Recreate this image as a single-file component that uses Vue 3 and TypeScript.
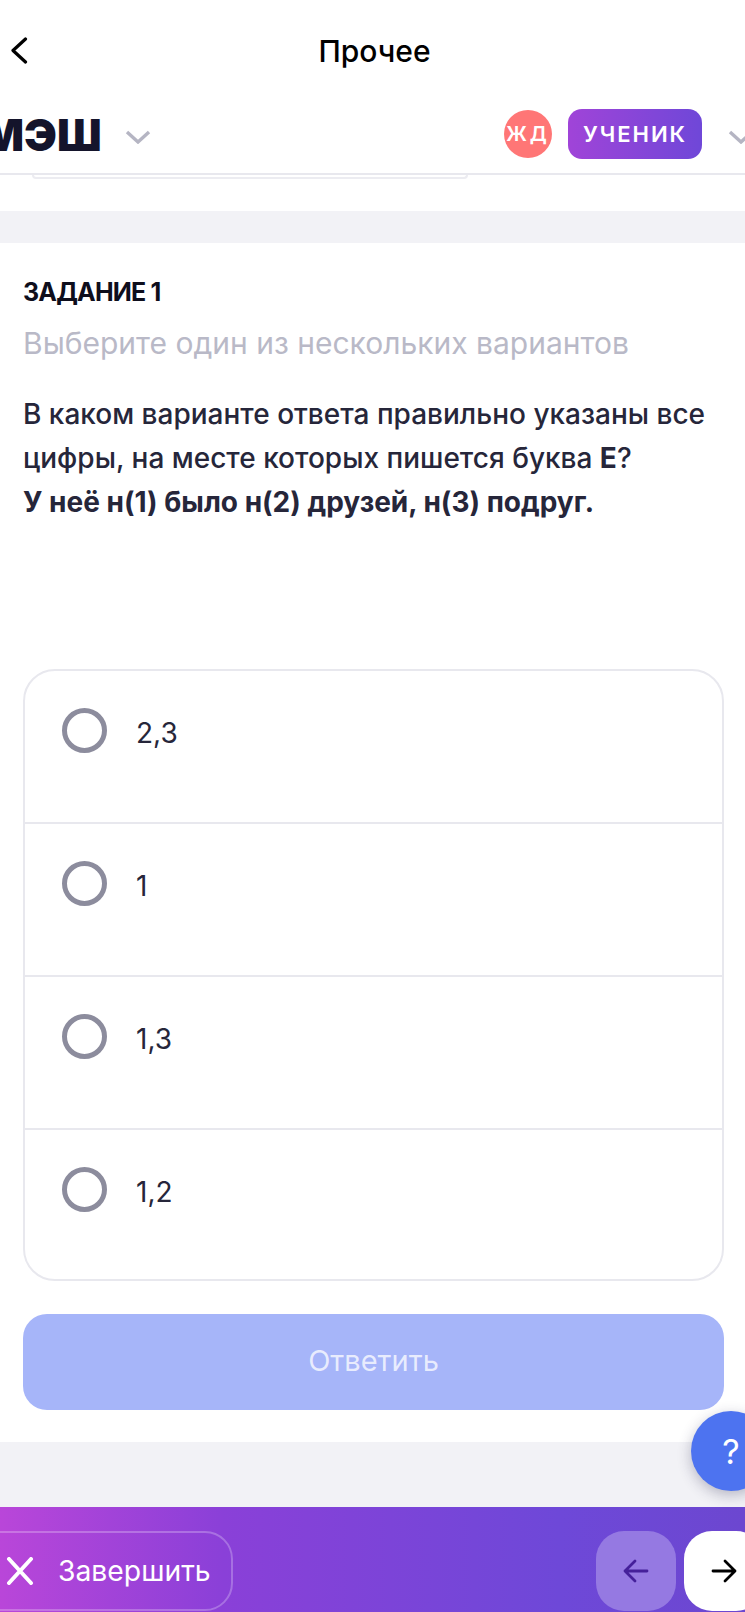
<script setup lang="ts">
const options: string[] = ['2,3', '1', '1,3', '1,2']
</script>

<template>
  <div class="page">
    <header class="nav">
      <svg class="back" width="18" height="27" viewBox="0 0 18 27"><path d="M15.5 2 3 13.5 15.5 25" fill="none" stroke="#000" stroke-width="3.2" stroke-linecap="round" stroke-linejoin="round"/></svg>
      <span class="nav-title">Прочее</span>
    </header>
    <div class="topbar">
      <span class="logo">МЭШ</span>
      <svg class="chev" width="26" height="14" viewBox="0 0 26 14"><path d="M2 2 13 12 24 2" fill="none" stroke="#b5b5c3" stroke-width="3.4"/></svg>
      <span class="avatar">ЖД</span>
      <span class="role">УЧЕНИК</span>
      <svg class="chev chev-r" width="26" height="14" viewBox="0 0 26 14"><path d="M2 2 13 12 24 2" fill="none" stroke="#b5b5c3" stroke-width="3.4"/></svg>
    </div>
    <div class="scrap-wrap"><div class="scrap"></div></div>
    <main class="task">
      <h2 class="task-num">ЗАДАНИЕ 1</h2>
      <p class="hint">Выберите один из нескольких вариантов</p>
      <p class="question">В каком варианте ответа правильно указаны все цифры, на месте которых пишется буква <b>Е</b>?<br><b>У неё н(1) было н(2) друзей, н(3) подруг.</b></p>
      <div class="options">
        <div v-for="o in options" :key="o" class="option">
          <span class="radio"></span>
          <span class="opt-text">{{ o }}</span>
        </div>
      </div>
      <button class="submit">Ответить</button>
    </main>
    <div class="gap-bottom"></div>
    <footer class="footer">
      <button class="finish">
        <svg width="28" height="28" viewBox="0 0 28 28"><path d="M3 2 25 26M25 2 3 26" fill="none" stroke="#fff" stroke-width="4" stroke-linecap="round"/></svg>
        <span>Завершить</span>
      </button>
      <div class="arrows">
        <button class="arrow arrow-prev">
          <svg width="26" height="24" viewBox="0 0 26 24"><path d="M24 12H2M12 2 2 12 12 22" fill="none" stroke="#45209a" stroke-width="2.8" stroke-linecap="round" stroke-linejoin="round"/></svg>
        </button>
        <button class="arrow arrow-next">
          <svg width="26" height="24" viewBox="0 0 26 24"><path d="M2 12H24M14 2 24 12 14 22" fill="none" stroke="#000" stroke-width="2.8" stroke-linecap="round" stroke-linejoin="round"/></svg>
        </button>
      </div>
    </footer>
    <button class="help">?</button>
  </div>
</template>

<style>
html, body { margin: 0; background: #fff; }
</style>

<style scoped>
.page {
  position: relative;
  width: 745px;
  height: 1612px;
  overflow: hidden;
  background: #fff;
  font-family: Inter, "Liberation Sans", sans-serif;
  color: #26263a;
  display: flex;
  flex-direction: column;
}
.nav {
  position: relative;
  height: 103px;
  flex: none;
  display: flex;
  align-items: flex-start;
  justify-content: center;
}
.back { position: absolute; left: 10px; top: 37px; }
.nav-title {
  margin: 33px 0 0 4px;
  font-family: Inter, sans-serif;
  font-size: 30px;
  font-weight: 500;
  line-height: 36px;
  color: #000;
}
.topbar {
  height: 70px;
  flex: none;
  display: flex;
  align-items: flex-start;
  border-bottom: 2px solid #e8e8ee;
  box-sizing: content-box;
}
.logo {
  margin: 7px 0 0 -18px;
  font-family: Inter, sans-serif;
  font-size: 44px;
  font-weight: 900;
  line-height: 50px;
  color: #14142b;
}
.chev { margin: 27px 0 0 23px; flex: none; }
.avatar {
  margin: 7px 0 0 auto;
  width: 48px;
  height: 48px;
  border-radius: 50%;
  background: #ff7676;
  color: #fff;
  font-size: 20px;
  font-weight: 600;
  letter-spacing: 3px;
  display: flex;
  align-items: center;
  justify-content: center;
  flex: none;
}
.role {
  margin: 6px 0 0 16px;
  width: 134px;
  height: 50px;
  border-radius: 14px;
  background: linear-gradient(90deg, #a044d8, #6f47d8);
  color: #fff;
  font-size: 22px;
  font-weight: 600;
  letter-spacing: 2px;
  display: flex;
  align-items: center;
  justify-content: center;
  flex: none;
}
.chev-r { margin: 27px -9px 0 26px; }
.scrap-wrap {
  height: 36px;
  flex: none;
}
.scrap {
  margin-left: 32px;
  width: 436px;
  height: 4px;
  box-sizing: border-box;
  border: 2px solid #ececf1;
  border-top: 0;
  border-radius: 0 0 18px 18px;
}
.task {
  border-top: 32px solid #f2f2f6;
  flex: none;
  height: 1231px;
  box-sizing: border-box;
  padding: 31px 21px 0 23px;
  display: flex;
  flex-direction: column;
}
.task-num {
  margin: 0;
  font-size: 25px;
  font-weight: 700;
  line-height: 36px;
  color: #0e0e1c;
  letter-spacing: -0.8px;
}
.hint {
  margin: 11px 0 0;
  font-size: 30px;
  line-height: 44px;
  color: #b9b9c7;
}
.question {
  margin: 27px 0 0;
  font-size: 28px;
  font-weight: 450;
  line-height: 44px;
  color: #26263a;
}
.question b { font-size: 28px; font-weight: 700; }
.options {
  margin-top: auto;
  border: 2px solid #e8e8ee;
  border-radius: 32px;
  height: 612px;
  box-sizing: border-box;
  flex: none;
}
.option {
  height: 153px;
  box-sizing: border-box;
  padding: 37px 0 0 37px;
  display: flex;
  align-items: flex-start;
  border-bottom: 2px solid #e8e8ee;
}
.option:last-child { border-bottom: 0; }
.radio {
  width: 45px;
  height: 45px;
  box-sizing: border-box;
  border: 5px solid #8c8c9d;
  border-radius: 50%;
  flex: none;
}
.opt-text {
  margin-left: 29px;
  font-size: 28px;
  line-height: 50px;
}
.submit {
  margin-top: 33px;
  margin-bottom: 32px;
  height: 96px;
  flex: none;
  border: 0;
  border-radius: 24px;
  padding: 0 0 3px;
  background: #a6b5f9;
  color: rgba(255, 255, 255, 0.75);
  font-family: inherit;
  font-size: 29px;
}
.gap-bottom {
  height: 65px;
  flex: none;
  background: #f2f2f6;
}
.footer {
  height: 105px;
  flex: none;
  box-sizing: border-box;
  padding: 24px 0 0;
  background: linear-gradient(90deg, #b946d9 0%, #8a40d8 30%, #6e48d8 75%, #6c47d0 100%);
  display: flex;
  align-items: flex-start;
  justify-content: space-between;
}
.finish {
  margin-left: -32px;
  width: 265px;
  height: 80px;
  box-sizing: border-box;
  padding: 0 0 0 36px;
  border: 2px solid rgba(255, 255, 255, 0.25);
  border-radius: 28px;
  background: transparent;
  color: #fff;
  font-family: inherit;
  font-size: 28.3px;
  display: flex;
  align-items: center;
  gap: 24px;
}
.arrows {
  display: flex;
  gap: 8px;
  margin-right: -19px;
}
.arrow {
  width: 80px;
  height: 80px;
  border: 0;
  border-radius: 28px;
  padding: 0;
  display: flex;
  align-items: center;
  justify-content: center;
}
.arrow-prev { background: #9579e2; }
.arrow-next { background: #fff; }
.help {
  position: absolute;
  left: 691px;
  top: 1411px;
  width: 80px;
  height: 80px;
  padding: 0;
  border: 0;
  border-radius: 50%;
  background: #4d73f0;
  color: #fff;
  font-family: inherit;
  font-size: 34px;
  box-shadow: 0 4px 14px rgba(40, 40, 80, 0.3);
}
</style>
